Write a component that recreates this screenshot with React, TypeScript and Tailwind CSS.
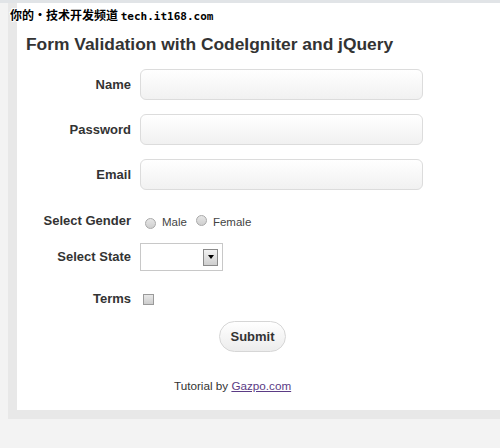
import React from "react";

const Field = ({ label }: { label: string }) => (
  <div className="flex items-center">
    <label className="w-[114px] text-right text-[13px] font-bold text-[#333]">{label}</label>
    <div className="ml-[9px] h-[31px] w-[283px] rounded-[6px] border border-[#dcdcdc] bg-gradient-to-b from-white to-[#f1f1f1]" />
  </div>
);

const Radio = () => (
  <span className="inline-block h-[11px] w-[11px] rounded-full border border-[#a9a9a9] bg-gradient-to-b from-[#e6e6e6] to-[#cfcfcf]" />
);

const App = () => {
  return (
    <div className="min-h-[448px] bg-[#f3f3f3]" style={{ fontFamily: '"Liberation Sans", Arial, sans-serif' }}>
      <div className="relative h-[3px] bg-[#e1e4e7]">
        <div className="absolute left-[10px] top-[7px] whitespace-nowrap text-[12px] font-bold leading-[16px] text-black" style={{ fontFamily: '"Noto Sans CJK SC", "DejaVu Sans Mono", monospace', textShadow: "1px 0 #fff, -1px 0 #fff, 0 1px #fff, 0 -1px #fff, 1px 1px #fff, -1px -1px #fff" }}>
          你的·技术开发频道 <span className="text-[11px]" style={{ fontFamily: '"DejaVu Sans Mono", monospace' }}>tech.it168.com</span>
        </div>
      </div>
      <div className="ml-[8px] bg-[#e8e8e8] pb-[9px] pl-[9px]">
        <div className="bg-white pb-[16px] pt-[30px]">
          <h1 className="relative z-10 pl-[9px] text-[17.4px] font-bold leading-[22px] text-[#333]">
            Form Validation with CodeIgniter and jQuery
          </h1>

          <div className="mt-[14px] flex flex-col gap-[14px]">
            <Field label="Name" />
            <Field label="Password" />
            <Field label="Email" />
          </div>

          <div className="mt-[21px] flex h-[20px] items-center">
            <label className="w-[114px] text-right text-[13px] font-bold text-[#333]">Select Gender</label>
            <div className="ml-[14px] mt-[4px] flex items-center text-[11.5px] text-[#444]">
              <Radio />
              <span className="ml-[6px]">Male</span>
              <span className="ml-[9px]"><Radio /></span>
              <span className="ml-[6px]">Female</span>
            </div>
          </div>

          <div className="mt-[12px] flex items-center">
            <label className="w-[114px] text-right text-[13px] font-bold text-[#333]">Select State</label>
            <div className="ml-[9px] flex h-[28px] w-[83px] items-center justify-end border border-[#c8c8c8] bg-white pr-[4px]">
              <div className="flex h-[17px] w-[15px] items-center justify-center border border-[#8a8a8a] bg-gradient-to-b from-[#f2f2f2] to-[#cfcfcf]">
                <span className="h-0 w-0 border-x-[3.5px] border-t-[4px] border-x-transparent border-t-black" />
              </div>
            </div>
          </div>

          <div className="mt-[18px] flex h-[20px] items-center">
            <label className="w-[114px] text-right text-[13px] font-bold text-[#333]">Terms</label>
            <span className="ml-[12px] inline-block h-[11px] w-[11px] border border-[#9a9a9a] bg-gradient-to-b from-[#e8e8e8] to-[#cdcdcd]" />
          </div>

          <div className="mt-[12px] pl-[202px]">
            <button className="h-[31px] w-[67px] rounded-full border border-[#d6d6d6] bg-gradient-to-b from-white to-[#ececec] text-[13px] font-bold text-[#333]">
              Submit
            </button>
          </div>

          <p className="mt-[26px] pl-[157px] text-[11.7px] leading-[16px] text-[#333]">
            Tutorial by <a className="text-[#5b3b85] underline">Gazpo.com</a>
          </p>
        </div>
      </div>
    </div>
  );
};

export default App;
